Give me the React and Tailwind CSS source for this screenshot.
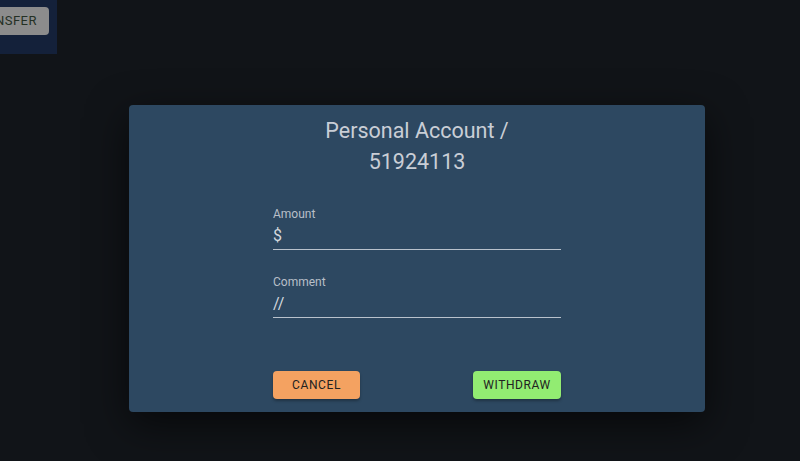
export default function App() {
  return (
    <div className="relative w-[800px] h-[461px] overflow-hidden bg-[#111418]" style={{ fontFamily: "Roboto, 'Liberation Sans', sans-serif" }}>
      <div className="w-[57px] h-[54px] bg-[#14213a] overflow-hidden relative">
        <div className="absolute right-[8px] top-[7px] h-[28px] px-3 rounded bg-[#8c8c8c] flex items-center text-[13px] tracking-[0.5px] text-[#243024] whitespace-nowrap">
          TRANSFER
        </div>
      </div>
      <div className="absolute inset-0 pl-[129px] pt-[105px]">
        <div className="w-[576px] h-[307px] rounded bg-[#2d4861] shadow-[0_12px_40px_rgba(0,0,0,0.6)] flex flex-col items-center pt-[10px]">
          <div className="text-[21.5px] leading-[31px] text-[#c9ced6] text-center">
            <div>Personal Account /</div>
            <div>51924113</div>
          </div>
          <div className="w-[288px] mt-[30px]">
            <div className="text-[12px] leading-[14px] text-[#b8bfc8]">Amount</div>
            <div className="h-[29px] border-b border-[#b9c2cc] flex items-center text-[16px] text-[#d3d8de] pt-[2px]">$</div>
            <div className="text-[12px] leading-[14px] text-[#b8bfc8] mt-[25px]">Comment</div>
            <div className="h-[29px] border-b border-[#b9c2cc] flex items-center text-[16px] text-[#d3d8de] pt-[2px]">//</div>
            <div className="flex justify-between mt-[53px]">
              <button className="w-[87px] h-[28px] rounded bg-[#f4a261] text-[12px] tracking-[0.6px] text-[#222] shadow-[0_2px_3px_rgba(0,0,0,0.3)]">CANCEL</button>
              <button className="w-[88px] h-[28px] rounded bg-[#92ec72] text-[12px] tracking-[0.6px] text-[#222] shadow-[0_2px_3px_rgba(0,0,0,0.3)]">WITHDRAW</button>
            </div>
          </div>
        </div>
      </div>
    </div>
  );
}
